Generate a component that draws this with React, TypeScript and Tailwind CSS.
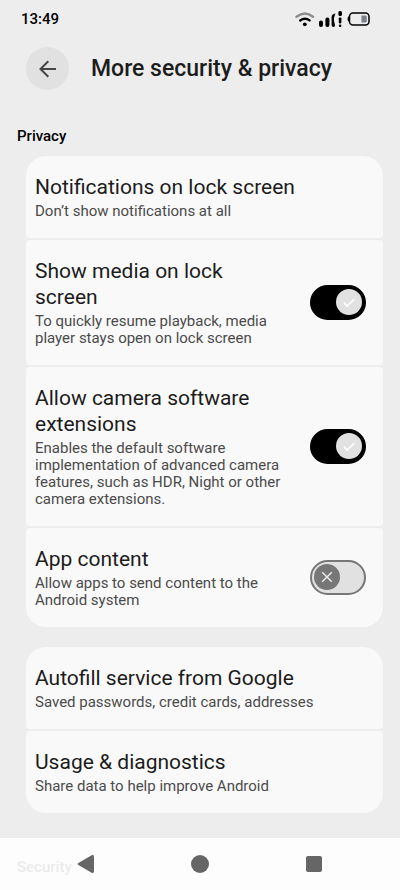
import { useId, useState } from "react";

type Item = { title: string; detail: string; enabled?: boolean };

const privacyItems: Item[] = [
  { title: "Notifications on lock screen", detail: "Don’t show notifications at all" },
  {
    title: "Show media on lock screen",
    detail: "To quickly resume playback, media player stays open on lock screen",
    enabled: true,
  },
  {
    title: "Allow camera software extensions",
    detail:
      "Enables the default software implementation of advanced camera features, such as HDR, Night or other camera extensions.",
    enabled: true,
  },
  { title: "App content", detail: "Allow apps to send content to the Android system", enabled: false },
];

const serviceItems: Item[] = [
  { title: "Autofill service from Google", detail: "Saved passwords, credit cards, addresses" },
  { title: "Usage & diagnostics", detail: "Share data to help improve Android" },
];

const cardClass =
  "flex w-full items-center rounded-[4px] bg-[#f9f9f9] py-[18px] pr-[17px] pl-[9px] text-left group-first:rounded-t-[20px] group-last:rounded-b-[20px]";

function ItemText({ item }: { item: Item }) {
  return (
    <span className="flex min-w-0 flex-1 flex-col gap-[3px]">
      <span className="block text-[21px] leading-[26px] text-[#1c1c1c]">{item.title}</span>
      <span className="block text-[15px] leading-[17px] text-[#4b4b4b]">{item.detail}</span>
    </span>
  );
}

function ToggleCard({ item }: { item: Item }) {
  const id = useId();
  const [on, setOn] = useState(item.enabled ?? false);
  return (
    <label htmlFor={id} className={cardClass}>
      <ItemText item={item} />
      <span className="relative ml-5 block h-[35px] w-14 shrink-0">
        <input
          id={id}
          type="checkbox"
          role="switch"
          checked={on}
          onChange={(e) => setOn(e.target.checked)}
          className="block h-full w-full appearance-none rounded-full border-2 border-[#777777] bg-[#e1e1e1] checked:border-black checked:bg-black"
        />
        <svg
          viewBox="0 0 26 26"
          aria-hidden="true"
          className={
            on
              ? "pointer-events-none absolute top-1 right-1 size-[26px]"
              : "pointer-events-none absolute top-1 left-1 size-[26px]"
          }
        >
          <circle cx="13" cy="13" r="13" fill={on ? "#e1e1e1" : "#777777"} />
          {on ? (
            <path d="M7.8 13.6l3.5 3.5 7-7.2" fill="none" stroke="#fff" strokeWidth="1.5" />
          ) : (
            <path d="M8.2 8.2l9.6 9.6M17.8 8.2l-9.6 9.6" fill="none" stroke="#e8e8e8" strokeWidth="1.5" />
          )}
        </svg>
      </span>
    </label>
  );
}

function Group({ items }: { items: Item[] }) {
  return (
    <ul className="flex flex-col gap-[2px]">
      {items.map((item) => (
        <li key={item.title} className="group">
          {item.enabled === undefined ? (
            <button type="button" className={cardClass}>
              <ItemText item={item} />
            </button>
          ) : (
            <ToggleCard item={item} />
          )}
        </li>
      ))}
    </ul>
  );
}

function StatusBar() {
  return (
    <div className="flex h-[38px] items-center justify-between pr-[29px] pl-[21px]">
      <span className="text-[15px] leading-5 font-medium text-black">13:49</span>
      <div className="flex items-center gap-1">
        <svg viewBox="0 0 20 16" className="h-4 w-5" fill="none" strokeLinecap="round" aria-hidden="true">
          <path d="M1.500 5.800Q10 -0.800 18 5.800" stroke="#8c8c8c" strokeWidth="2.400" />
          <path d="M5.200 9.400Q10 6 14.600 9.400" stroke="#000" strokeWidth="2.400" />
          <circle cx="9.800" cy="13.300" r="1.900" fill="#000" />
        </svg>
        <svg viewBox="0 0 24 18" className="h-[18px] w-6" aria-hidden="true">
          <rect x="0" y="10.500" width="4" height="6.500" rx="1.900" />
          <rect x="6.400" y="7.500" width="4" height="9.500" rx="1.900" />
          <path d="M16.400 3.600Q12.600 4.200 12.600 7v8q0 2 1.800 2t1.600-1.800l-1-4.400Q14.600 8 16.400 3.600z" />
          <rect x="19.400" y="1" width="3.600" height="5" rx="1.500" />
          <rect x="19.800" y="7.400" width="2.600" height="6" rx="0.800" />
          <circle cx="21.100" cy="15.800" r="1.300" />
        </svg>
        <svg viewBox="0 0 24 16" className="h-4 w-6" aria-hidden="true">
          <path d="M2.500 5Q0.500 5.500 0.500 8t2 3z" />
          <rect x="2.500" y="2" width="19.500" height="12" rx="3.500" fill="none" stroke="#000" strokeWidth="1.500" />
          <path d="M14.500 4.500h4q1.200 0 1.200 1.200v4.600q0 1.200-1.200 1.200h-4z" fill="#7b828a" />
        </svg>
      </div>
    </div>
  );
}

function NavBar() {
  return (
    <nav className="fixed inset-x-0 bottom-0 grid h-[52px] grid-cols-[43%_14%_43%] items-center border-t border-white bg-[#fefefe]/92 pb-[2px]">
      <button type="button" aria-label="Back" className="justify-self-center">
        <svg viewBox="0 0 18 20" className="h-5 w-[18px]" aria-hidden="true">
          <path
            d="M1 9.200L14.600 1.200Q16.800 0.400 17 2.400V17.600Q16.800 19.600 14.600 18.800L1 10.800Q0 10 1 9.200z"
            fill="#666"
          />
        </svg>
      </button>
      <button type="button" aria-label="Home" className="justify-self-center">
        <span className="block size-[18px] rounded-full bg-[#666666]" />
      </button>
      <button type="button" aria-label="Recent apps" className="justify-self-center">
        <span className="block size-4 rounded-[2px] bg-[#666666]" />
      </button>
    </nav>
  );
}

export default function App() {
  return (
    <div className="min-h-screen bg-[#ededed] font-['Roboto',sans-serif]">
      <StatusBar />
      <header className="flex items-center gap-[22px] px-[26px] pt-[9px]">
        <button
          type="button"
          aria-label="Navigate up"
          className="flex size-[43px] shrink-0 items-center justify-center rounded-full bg-[#e1e1e1]"
        >
          <svg viewBox="0 0 18 18" className="size-[18px]" fill="none" stroke="#464646" strokeWidth="2" aria-hidden="true">
            <path d="M17 9H2M9.300 1.200L1.500 9l7.800 7.800" />
          </svg>
        </button>
        <h1 className="text-[23px] leading-8 font-medium text-[#1c1c1c]">More security &amp; privacy</h1>
      </header>
      <main className="pt-9 pr-[17px] pl-[26px]">
        <h2 className="-ml-[9px] pb-[10px] text-[15px] leading-5 font-medium text-black">Privacy</h2>
        <div className="flex flex-col gap-5">
          <Group items={privacyItems} />
          <Group items={serviceItems} />
        </div>
        <h2 className="-ml-[9px] pt-11 text-[15px] leading-5 font-medium text-black">Security</h2>
      </main>
      <NavBar />
    </div>
  );
}
